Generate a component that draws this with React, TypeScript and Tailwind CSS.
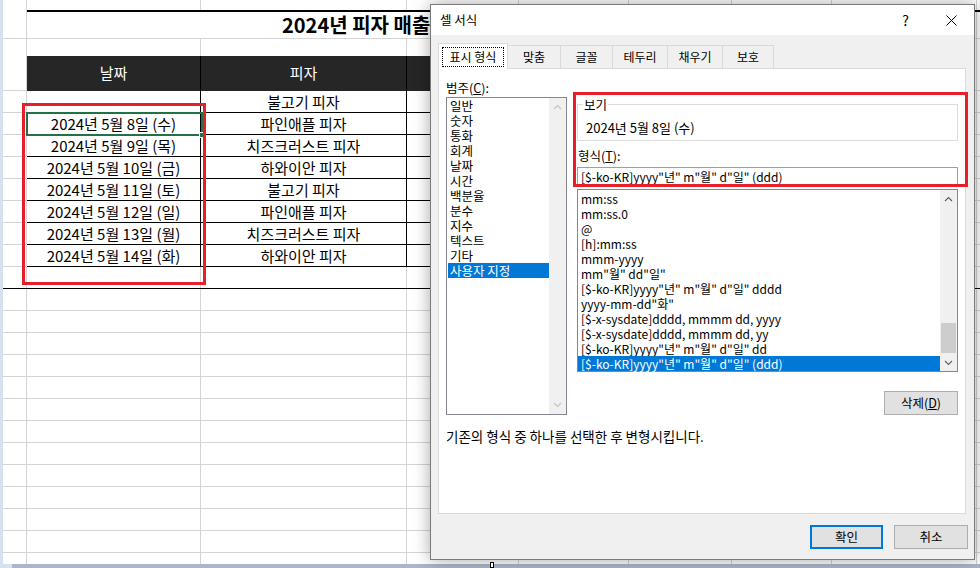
import React from "react";

const FONT = "font-['Noto_Sans_CJK_KR','Noto_Sans',sans-serif]";

const colW = [
  "w-[24px]",
  "w-[174px]",
  "w-[206px]",
  "w-[112px]",
  "w-[110px]",
  "w-[103px]",
  "w-[100px]",
  "w-[145px]",
];

const rows: [string, string][] = [
  ["", "불고기 피자"],
  ["2024년 5월 8일 (수)", "파인애플 피자"],
  ["2024년 5월 9일 (목)", "치즈크러스트 피자"],
  ["2024년 5월 10일 (금)", "하와이안 피자"],
  ["2024년 5월 11일 (토)", "불고기 피자"],
  ["2024년 5월 12일 (일)", "파인애플 피자"],
  ["2024년 5월 13일 (월)", "치즈크러스트 피자"],
  ["2024년 5월 14일 (화)", "하와이안 피자"],
];

const formats = [
  "mm:ss",
  "mm:ss.0",
  "@",
  "[h]:mm:ss",
  "mmm-yyyy",
  'mm"월" dd"일"',
  '[$-ko-KR]yyyy"년" m"월" d"일" dddd',
  'yyyy-mm-dd"화"',
  "[$-x-sysdate]dddd, mmmm dd, yyyy",
  "[$-x-sysdate]dddd, mmmm dd, yy",
  '[$-ko-KR]yyyy"년" m"월" d"일" dd',
  '[$-ko-KR]yyyy"년" m"월" d"일" (ddd)',
];

const categories = [
  "일반",
  "숫자",
  "통화",
  "회계",
  "날짜",
  "시간",
  "백분율",
  "분수",
  "지수",
  "텍스트",
  "기타",
  "사용자 지정",
];

function GreyRow() {
  return (
    <div className="flex h-[22px] shrink-0">
      {colW.map((w, i) => (
        <div key={i} className={`${w} shrink-0 border-r border-b border-[#d4d4d4]`} />
      ))}
      <div className="flex-1 border-b border-[#d4d4d4]" />
    </div>
  );
}

function Chevron({ up, color }: { up: boolean; color: string }) {
  return (
    <svg width="9" height="6" viewBox="0 0 9 6">
      <path
        d={up ? "M1 5 L4.5 1.5 L8 5" : "M1 1 L4.5 4.5 L8 1"}
        stroke={color}
        strokeWidth="1.1"
        fill="none"
      />
    </svg>
  );
}

function Sheet() {
  return (
    <div className="flex flex-col h-[564px] w-[977px] bg-white overflow-hidden">
      {/* partial top row */}
      <div className="flex h-[10px] shrink-0">
        {colW.map((w, i) => (
          <div key={i} className={`${w} shrink-0 border-r border-[#d4d4d4]`} />
        ))}
        <div className="flex-1" />
      </div>
      {/* thick line */}
      <div className="flex h-[2px] shrink-0">
        <div className="w-[24px] shrink-0 border-r border-[#d4d4d4]" />
        <div className="flex-1 bg-black" />
      </div>
      {/* title row */}
      <div className="flex h-[27px] shrink-0">
        <div className="w-[24px] shrink-0 border-r border-b border-[#d4d4d4]" />
        <div className="w-[805px] shrink-0 border-r border-b border-[#d4d4d4] flex items-center pl-[255px] text-[20px] font-bold leading-none text-black whitespace-nowrap">
          2024년 피자 매출
        </div>
        <div className="w-[145px] shrink-0 border-r border-b border-[#d4d4d4]" />
        <div className="flex-1 border-b border-[#d4d4d4]" />
      </div>
      {/* spacer row */}
      <div className="flex h-[17px] shrink-0">
        {colW.map((w, i) => (
          <div key={i} className={`${w} shrink-0 border-r border-[#d4d4d4]`} />
        ))}
        <div className="flex-1" />
      </div>
      {/* header */}
      <div className="flex h-[35px] shrink-0">
        <div className="w-[24px] shrink-0 border-r border-b border-[#d4d4d4]" />
        <div className="w-[174px] shrink-0 bg-[#262626] border-r border-black flex items-center justify-center text-white text-[15px]">
          날짜
        </div>
        <div className="w-[206px] shrink-0 bg-[#262626] border-r border-black flex items-center justify-center text-white text-[15px]">
          피자
        </div>
        <div className="w-[112px] shrink-0 bg-[#262626] border-r border-black" />
        <div className="w-[110px] shrink-0 bg-[#262626] border-r border-black" />
        <div className="w-[103px] shrink-0 bg-[#262626] border-r border-black" />
        <div className="w-[100px] shrink-0 bg-[#262626] border-r border-black" />
        <div className="w-[145px] shrink-0 border-r border-b border-[#d4d4d4]" />
        <div className="flex-1 border-b border-[#d4d4d4]" />
      </div>
      {/* data rows */}
      {rows.map(([d, p], i) => (
        <div key={i} className="flex h-[22px] shrink-0 text-[15px] text-black leading-none">
          <div className="w-[24px] shrink-0 border-r border-b border-[#d4d4d4]" />
          <div className="w-[174px] shrink-0 border-r border-b border-black flex items-center justify-center whitespace-nowrap">
            {d}
          </div>
          <div className="w-[206px] shrink-0 border-r border-b border-black flex items-center justify-center whitespace-nowrap">
            {p}
          </div>
          <div className="w-[112px] shrink-0 border-r border-b border-black" />
          <div className="w-[110px] shrink-0 border-r border-b border-black" />
          <div className="w-[103px] shrink-0 border-r border-b border-black" />
          <div className="w-[100px] shrink-0 border-r border-b border-black" />
          <div className="w-[145px] shrink-0 border-r border-b border-[#d4d4d4]" />
          <div className="flex-1 border-b border-[#d4d4d4]" />
        </div>
      ))}
      {/* closing row with black bottom line */}
      <div className="flex h-[22px] shrink-0 border-b border-black">
        {colW.map((w, i) => (
          <div key={i} className={`${w} shrink-0 border-r border-[#d4d4d4]`} />
        ))}
        <div className="flex-1" />
      </div>
      {Array.from({ length: 13 }).map((_, i) => (
        <GreyRow key={i} />
      ))}
    </div>
  );
}

function Dialog() {
  const inactiveTabs: [string, string][] = [
    ["맞춤", "w-[53px]"],
    ["글꼴", "w-[52px]"],
    ["테두리", "w-[55px]"],
    ["채우기", "w-[55px]"],
    ["보호", "w-[51px]"],
  ];
  return (
    <div className="absolute left-[430px] top-[4px] w-[545px] h-[556px] border border-[#7a7a7a] bg-[#f0f0f0] shadow-[0_0_16px_rgba(0,0,0,0.35)] flex flex-col text-[12.5px] text-black">
      {/* title bar */}
      <div className="h-[30px] shrink-0 bg-white flex items-center pl-[9px] pr-[17px]">
        <span className="leading-none">셀 서식</span>
        <span className="ml-auto text-[14px] leading-none mr-[37px]">?</span>
        <svg width="11" height="11" viewBox="0 0 11 11">
          <path d="M0.5 0.5 L10.5 10.5 M10.5 0.5 L0.5 10.5" stroke="#000" strokeWidth="1" />
        </svg>
      </div>
      {/* body */}
      <div className="flex-1 flex flex-col pl-[7px] pt-[8px]">
        {/* tabs */}
        <div className="flex items-end h-[25px] shrink-0 text-[12px]">
          <div className="relative z-10 -mb-px w-[70px] h-[26px] bg-white border border-b-0 border-[#d9d9d9] p-[3px] pb-[2px] flex">
            <div className="flex-1 border border-dotted border-black flex items-center justify-center leading-none">
              표시 형식
            </div>
          </div>
          {inactiveTabs.map(([t, w]) => (
            <div
              key={t}
              className={`${w} h-[23px] border-t border-r border-[#d9d9d9] flex items-center justify-center leading-none`}
            >
              {t}
            </div>
          ))}
        </div>
        {/* panel */}
        <div className="w-[528px] h-[446px] shrink-0 bg-white border border-[#d9d9d9] flex flex-col px-[7px]">
          <div className="flex gap-[10px]">
            {/* category */}
            <div className="w-[121px] flex flex-col">
              <div className="h-[28px] pt-[11px] leading-[15px]">
                범주(<span className="underline">C</span>):
              </div>
              <div className="h-[318px] border border-[#828790] flex">
                <div className="flex-1 pl-[1px] flex flex-col">
                  {categories.map((c, i) => (
                    <div
                      key={c}
                      className={
                        i === categories.length - 1
                          ? "h-[15px] leading-[15px] pl-[2px] bg-[#0078d7] text-white whitespace-nowrap"
                          : "h-[15px] leading-[15px] pl-[2px] whitespace-nowrap"
                      }
                    >
                      {c}
                    </div>
                  ))}
                </div>
                <div className="w-[17px] bg-[#f0f0f0] flex flex-col justify-between items-center py-[6px]">
                  <Chevron up color="#c2c2c2" />
                  <Chevron up={false} color="#c2c2c2" />
                </div>
              </div>
            </div>
            {/* format */}
            <div className="w-[381px] flex flex-col">
              <div className="relative mt-[35px] h-[37px] border border-[#dcdcdc] pl-[8px] pt-[15px] leading-[15px] whitespace-nowrap text-[13px]">
                <span className="absolute -top-[8px] left-[5px] bg-white px-[1px] leading-[15px] text-[12.5px]">보기</span>
                2024년 5월 8일 (수)
              </div>
              <div className="mt-[7px] pl-[1px] leading-[15px] h-[15px]">
                형식(<span className="underline">T</span>):
              </div>
              <div className="mt-[4px] h-[19px] border border-[#a0a0a0] pl-[3px] leading-[17px] whitespace-nowrap text-[12px]">
                [$-ko-KR]yyyy"년" m"월" d"일" (ddd)
              </div>
              <div className="mt-[3px] h-[183px] border border-[#828790] flex text-[12px]">
                <div className="w-[362px] pt-[1px] flex flex-col">
                  {formats.map((f, i) => (
                    <div
                      key={f}
                      className={
                        i === formats.length - 1
                          ? "h-[15px] leading-[15px] pl-[3px] bg-[#0078d7] text-white whitespace-nowrap"
                          : "h-[15px] leading-[15px] pl-[3px] whitespace-nowrap"
                      }
                    >
                      {f}
                    </div>
                  ))}
                </div>
                <div className="flex-1 bg-[#f0f0f0] flex flex-col">
                  <div className="h-[17px] flex items-center justify-center">
                    <Chevron up color="#606060" />
                  </div>
                  <div className="h-[116px]" />
                  <div className="h-[30px] mx-[1px] bg-[#cdcdcd]" />
                  <div className="flex-1" />
                  <div className="h-[17px] flex items-center justify-center">
                    <Chevron up={false} color="#606060" />
                  </div>
                </div>
              </div>
              <div className="mt-[19px] self-end w-[74px] h-[24px] bg-[#e1e1e1] border border-[#adadad] flex items-center justify-center leading-none">
                삭제(<span className="underline">D</span>)
              </div>
            </div>
          </div>
          <div className="mt-[14px] leading-[15px] whitespace-nowrap text-[13.5px]">
            기존의 형식 중 하나를 선택한 후 변형시킵니다.
          </div>
        </div>
        {/* footer */}
        <div className="mt-[11px] flex justify-end gap-[11px] pr-[6px]">
          <div className="w-[73px] h-[24px] bg-[#e1e1e1] border-2 border-[#0078d7] flex items-center justify-center leading-none">
            확인
          </div>
          <div className="w-[74px] h-[24px] bg-[#e1e1e1] border border-[#adadad] flex items-center justify-center leading-none">
            취소
          </div>
        </div>
      </div>
    </div>
  );
}

export default function App() {
  return (
    <div className={`relative w-[980px] h-[568px] overflow-hidden bg-[#d6e0ef] ${FONT}`}>
      <div className="flex flex-col">
        <div className="flex">
          <div className="w-[3px] shrink-0" />
          <Sheet />
        </div>
        <div className="ml-[12px] h-[4px] bg-[#aab7cb]" />
      </div>

      {/* selection of cell B (5/8) */}
      <div className="absolute left-[26px] top-[112px] w-[177px] h-[24px] border-2 border-[#217346]" />
      <div className="absolute left-[199px] top-[132px] w-[6px] h-[6px] bg-[#217346] border border-white" />

      {/* annotation boxes */}
      <div className="absolute left-[22px] top-[103px] w-[184px] h-[182px] border-[3px] border-[#e5202a]" />

      <Dialog />

      <div className="absolute left-[573px] top-[92px] w-[395px] h-[95px] border-[3px] border-[#e5202a]" />

      <div className="absolute left-[490px] top-[562px] w-[4px] h-[6px] border border-black bg-white" />
    </div>
  );
}
